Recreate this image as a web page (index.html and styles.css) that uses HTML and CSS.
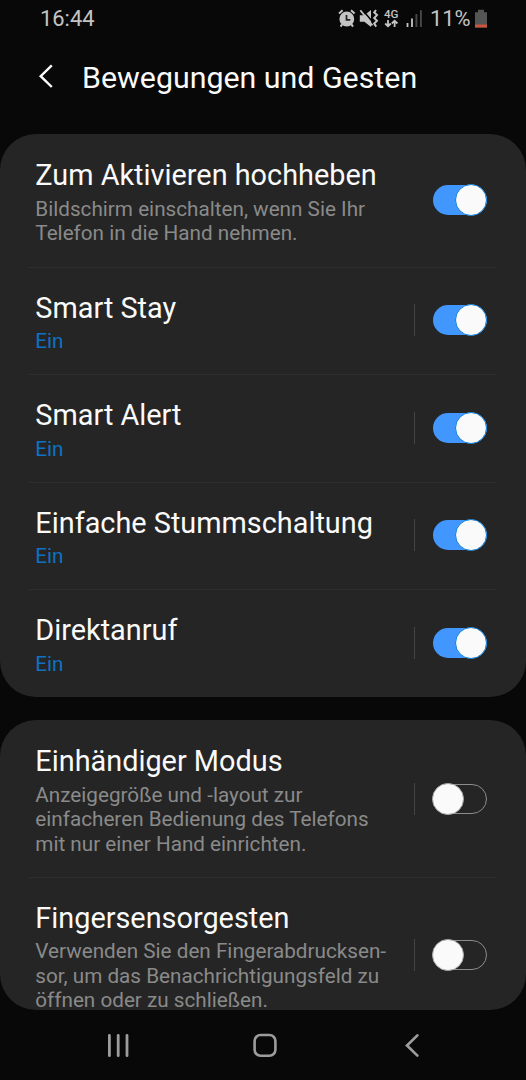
FILE: index.html
```html
<!DOCTYPE html>
<html lang="de">
<head>
<meta charset="utf-8">
<title>Bewegungen und Gesten</title>
<link rel="stylesheet" href="styles.css">
</head>
<body>
<div class="screen">
  <div class="status">
    <span class="clock">16:44</span>
    <svg class="status-icons" width="88" height="24" viewBox="0 0 88 24">
      <g fill="none" stroke="#c4c4c4" stroke-width="2">
        <circle cx="8.8" cy="12" r="6.4" fill="#c4c4c4"/>
        <path d="M1 6.4 4.6 3.2M16.6 6.4 13 3.2M4.3 17.2 2.6 19.6M13.3 17.2 15 19.6"/>
        <path d="M8.5 8v4.8h3.8" stroke="#202020" stroke-width="1.7"/>
      </g>
      <path d="M21.8 8.2h4.6l6.6-5.3v17.2l-6.6-5.4h-4.6z" fill="#c4c4c4"/>
      <path d="M24.2 2.6 36 16.5" stroke="#080808" stroke-width="1.6"/>
      <path d="M22.3 3.2 34.4 18.4" stroke="#c4c4c4" stroke-width="1.8"/>
      <path d="M38 3 36.2 5.3 39 8.1 36.2 11 39 13.8 36.2 16.6 38.2 19.6" fill="none" stroke="#c4c4c4" stroke-width="2"/>
      <text x="46" y="11" class="net">4G</text>
      <path d="M50 13v6.3M47.2 16.5 50 19.3l2.8-2.8M56.6 20v-6.3M53.8 16.5 56.6 13.7l2.8 2.8" fill="none" stroke="#c4c4c4" stroke-width="1.8"/>
      <path d="M69.5 16V20M74 11.4V20" stroke="#c4c4c4" stroke-width="1.8"/>
      <path d="M78.4 7V20M82.9 3.2V20" stroke="#484848" stroke-width="1.9"/>
    </svg>
    <span class="percent">11%</span>
    <svg class="battery" width="12" height="20" viewBox="0 0 12 20">
      <path d="M0 3.2h3V.7h6v2.5h3v15.3H0z" fill="#555"/>
      <path d="M0 15.5h12v3H0z" fill="#c95541"/>
    </svg>
  </div>
  <header class="header">
    <svg class="back" width="18" height="26" viewBox="0 0 18 26"><path d="M14.8 2.4 3.7 13.2 14.8 24" fill="none" stroke="#fafafa" stroke-width="2.4"/></svg>
    <h1>Bewegungen und Gesten</h1>
  </header>
  <main class="content">
    <section class="card">
      <div class="row intro">
        <div class="text"><h2>Zum Aktivieren hochheben</h2><p>Bildschirm einschalten, wenn Sie Ihr<br>Telefon in die Hand nehmen.</p></div>
        <span class="switch on"></span>
      </div>
      <div class="row"><div class="text"><h2>Smart Stay</h2><p class="state">Ein</p></div><span class="sep"></span><span class="switch on"></span></div>
      <div class="row"><div class="text"><h2>Smart Alert</h2><p class="state">Ein</p></div><span class="sep"></span><span class="switch on"></span></div>
      <div class="row"><div class="text"><h2>Einfache Stummschaltung</h2><p class="state">Ein</p></div><span class="sep"></span><span class="switch on"></span></div>
      <div class="row"><div class="text"><h2>Direktanruf</h2><p class="state">Ein</p></div><span class="sep"></span><span class="switch on"></span></div>
    </section>
    <section class="card last">
      <div class="row tall"><div class="text"><h2>Einhändiger Modus</h2><p>Anzeigegröße und -layout zur<br>einfacheren Bedienung des Telefons<br>mit nur einer Hand einrichten.</p></div><span class="sep"></span><span class="switch"></span></div>
      <div class="row tall"><div class="text"><h2>Fingersensorgesten</h2><p>Verwenden Sie den Fingerabdrucksen-<br>sor, um das Benachrichtigungsfeld zu<br>öffnen oder zu schließen.</p></div><span class="sep"></span><span class="switch"></span></div>
    </section>
  </main>
  <nav class="nav">
    <svg width="24" height="26" viewBox="0 0 24 26"><path d="M3.4 3.3v20.4M12.2 3.3v20.4M21 3.3v20.4" stroke="#9c9c9c" stroke-width="2.8" stroke-linecap="round"/></svg>
    <svg class="home" width="26" height="26" viewBox="0 0 26 26"><rect x="2.6" y="3" width="20.8" height="20.8" rx="6" fill="none" stroke="#9c9c9c" stroke-width="2.6"/></svg>
    <svg width="18" height="26" viewBox="0 0 18 26"><path d="M14.4 3.4 4 13.5 14.4 23.6" fill="none" stroke="#9c9c9c" stroke-width="2.7" stroke-linecap="round"/></svg>
  </nav>
</div>
</body>
</html>
```
FILE: styles.css
```css
*, *::before, *::after { box-sizing: border-box; }
body { margin: 0; background: #080808; font-family: Roboto, "Liberation Sans", sans-serif; }
h1, h2, p { margin: 0; font-weight: 400; white-space: nowrap; }
svg { display: block; flex: none; }
.screen { width: 526px; height: 1080px; overflow: hidden; display: flex; flex-direction: column; background: #080808; }
.status { height: 36px; flex: none; display: flex; align-items: center; padding: 1px 39px 0 40px; color: #c4c4c4; font-size: 21.9px; }
.clock { margin-right: auto; }
.status-icons { margin: 1px 4px 0 0; }
.net { font-size: 11.6px; font-weight: 500; fill: #c4c4c4; }
.battery { margin: 0 0 0 4px; }
.percent { width: 41px; white-space: nowrap; }
.header { height: 98px; flex: none; display: flex; padding: 24px 0 0 37px; }
.back { margin-top: 3px; }
.header h1 { margin-left: 27px; font-size: 30.35px; line-height: 36px; color: #fafafa; }
.content { height: 876px; flex: none; display: flex; flex-direction: column; gap: 23.5px; }
.card { border-radius: 36px; background: #252525; flex: none; overflow: hidden; }
.card.last { flex: 1; min-height: 0; }
.row { height: 107.6px; display: flex; align-items: center; padding: 0 39px 0 35.3px; background: linear-gradient(#2e2e2e, #2e2e2e) 28px 0 / 469px 1px no-repeat; }
.row:first-child { background: none; }
.row.intro { height: 132.5px; }
.row.tall { height: 156.6px; }
.text { align-self: flex-start; flex: 1; padding-top: 24px; }
h2 { font-size: 28.85px; line-height: 34px; color: #fafafa; }
p { margin-top: 4.5px; font-size: 20.7px; line-height: 24.4px; color: #8a8a8a; }
.state { color: #0e72c4; }
.sep { width: 1px; height: 32px; margin-right: 18px; background: #444; }
.switch { width: 54px; height: 32px; flex: none; display: flex; align-items: center; position: relative; }
.switch::before { content: ""; width: 54px; height: 30px; border: 1.5px solid #8c8c8c; border-radius: 15px; }
.switch::after { content: ""; position: absolute; left: -1px; top: 0; width: 32px; height: 32px; border: 1px solid #a5a5a5; border-radius: 50%; background: #fafafa; }
.switch.on::before { border: 0; background: #4297ff; }
.switch.on::after { left: 22px; border-color: #0e7fd8; }
.nav { flex: 1; display: flex; justify-content: space-between; padding: 22px 105px 0 106px; }
.home { margin-right: 4px; }
```
